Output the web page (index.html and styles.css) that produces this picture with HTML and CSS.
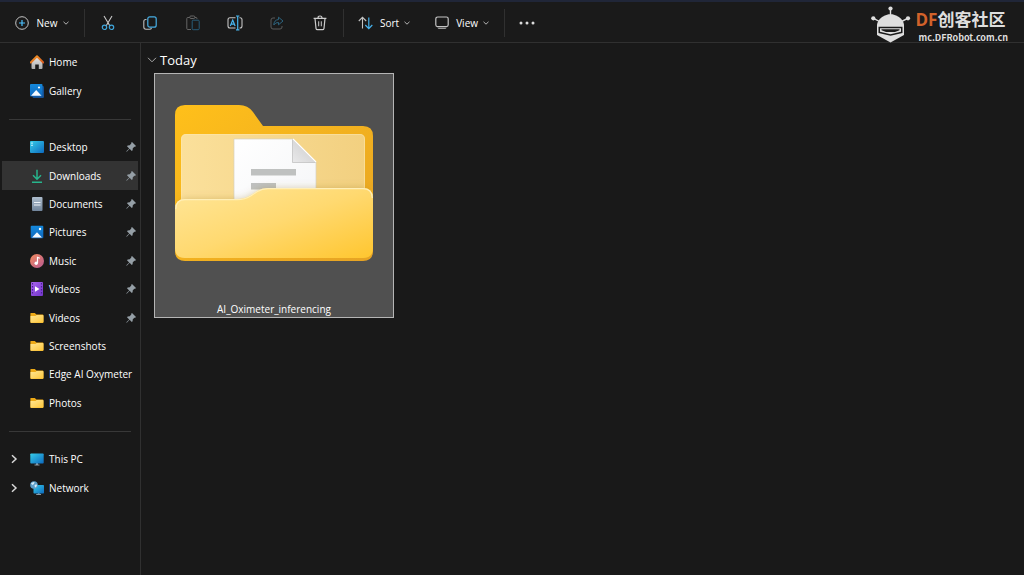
FILE: index.html
```html
<!DOCTYPE html>
<html lang="en">
<head>
  <meta charset="UTF-8" />
  <title>Downloads - File Explorer</title>
  <meta name="viewport" content="width=device-width, initial-scale=1.0"/>
  <link rel="stylesheet" href="styles.css">
</head>
<body>
  <!-- Shared icons -->
  <svg class="defs" width="0" height="0" aria-hidden="true">
    <defs>
      <linearGradient id="folderSmall" x1="0" y1="0" x2="1" y2="1">
        <stop offset="0" stop-color="#ffe694"/><stop offset="1" stop-color="#fdc63a"/>
      </linearGradient>
      <linearGradient id="screen" x1="0" y1="0" x2="1" y2="1">
        <stop offset="0" stop-color="#36cdea"/><stop offset="1" stop-color="#0d69be"/>
      </linearGradient>
      <linearGradient id="photo" x1="0" y1="0" x2="0" y2="1">
        <stop offset="0" stop-color="#1589dc"/><stop offset="1" stop-color="#0e67bd"/>
      </linearGradient>
      <linearGradient id="roof" x1="0" y1="0" x2="1" y2="1">
        <stop offset="0" stop-color="#f59a27"/><stop offset="1" stop-color="#d95b20"/>
      </linearGradient>
      <linearGradient id="wall" x1="0" y1="0" x2="0" y2="1">
        <stop offset="0" stop-color="#e6e6e6"/><stop offset="1" stop-color="#acacac"/>
      </linearGradient>
      <linearGradient id="paper" x1="0" y1="0" x2="0" y2="1">
        <stop offset="0" stop-color="#aebdcd"/><stop offset="1" stop-color="#71859c"/>
      </linearGradient>
      <linearGradient id="disc" x1="0" y1="0" x2="1" y2="1">
        <stop offset="0" stop-color="#f28b5c"/><stop offset="1" stop-color="#b85a93"/>
      </linearGradient>
      <linearGradient id="film" x1="0" y1="0" x2="1" y2="1">
        <stop offset="0" stop-color="#a964ef"/><stop offset="1" stop-color="#7336cb"/>
      </linearGradient>
    </defs>
    <symbol id="pin" viewBox="0 0 10 10">
      <path fill="#959fa6" d="M6 0 10 4 9.200 4.800 8.400 4.700 6.800 6.300 6.600 8.300 5.800 9 3.600 6.800 .8 9.700 .3 9.200 3.200 6.400 1 4.200 1.700 3.400 3.700 3.200 5.300 1.600 5.200 .8Z"/>
    </symbol>
    <symbol id="folder" viewBox="0 0 14 14">
      <path fill="#eda916" d="M.8 2h4l1.600 1.600h6.200q.8 0 .8.8V11q0 1-.9 1H1.200q-.8 0-.8-.8V2.800Q.4 2 .8 2z"/>
      <path fill="url(#folderSmall)" d="M.5 5h5L6.700 4h6q.8 0 .8.8v6q0 .9-.9.9H1.300q-.8 0-.8-.8z"/>
    </symbol>
    <symbol id="chevron" viewBox="0 0 8 8">
      <path d="M1.500 2.800 4 5.200 6.500 2.800" fill="none" stroke="#b5b5b5"/>
    </symbol>
    <symbol id="expand" viewBox="0 0 8 10">
      <path d="M2 1.200 6 5 2 8.800" fill="none" stroke="#d8d8d8" stroke-width="1.500"/>
    </symbol>
  </svg>

  <header class="toolbar">
    <button type="button" class="tool new">
      <svg width="14" height="14" viewBox="0 0 14 14" fill="none">
        <circle cx="7" cy="7" r="6.300" stroke="#c4c4c4"/>
        <path d="M7 4v6M4 7h6" stroke="#4cc2ff" stroke-width="1.200"/>
      </svg>
      <span>New</span>
      <svg width="8" height="8"><use href="#chevron"/></svg>
    </button>

    <div class="actions">
      <button type="button" aria-label="Cut">
        <svg width="14" height="16" viewBox="0 0 14 16" fill="none">
          <path d="M3 1 8.800 10.800M11 1 5.200 10.800" stroke="#c8c8c8" stroke-width="1.100"/>
          <circle cx="3.500" cy="12.300" r="2.200" stroke="#3fa6dc" stroke-width="1.200"/>
          <circle cx="10.500" cy="12.300" r="2.200" stroke="#3fa6dc" stroke-width="1.200"/>
        </svg>
      </button>
      <button type="button" aria-label="Copy">
        <svg width="14" height="14" viewBox="0 0 14 14" fill="none">
          <path d="M3.500 3.500H2.800Q.8 3.500.8 5.500V11Q.8 13.200 3 13.200H6.500Q8.200 13.200 8.500 11.800" stroke="#bdbdbd" stroke-width="1.100"/>
          <rect x="4.800" y=".8" width="8.400" height="10.400" rx="2" stroke="#46aee5" stroke-width="1.200"/>
        </svg>
      </button>
      <button type="button" aria-label="Paste" disabled>
        <svg width="14" height="16" viewBox="0 0 14 16" fill="none">
          <path d="M3.800 2.500H1.800Q.8 2.500.8 3.500V13.500Q.8 14.500 1.800 14.500H5M9 2.500H10Q11 2.500 11 3.800" stroke="#656565"/>
          <rect x="3.800" y="1" width="5" height="2.500" rx="1" stroke="#656565"/>
          <rect x="6.200" y="5.200" width="7" height="9.500" rx="1" stroke="#285c78"/>
        </svg>
      </button>
      <button type="button" aria-label="Rename">
        <svg width="16" height="16" viewBox="0 0 16 16" fill="none">
          <path d="M8.500 2.800H3Q1 2.800 1 4.800V11Q1 13 3 13H8.500M12.500 2.800H13Q15 2.800 15 4.800V11Q15 13 13 13H12.500" stroke="#c4c4c4" stroke-width="1.100"/>
          <path d="M9 1h3.400M10.700 1v13.800M9 14.800h3.400M3.300 11 5.700 5 8.100 11M4.200 9.200h3" stroke="#48b5ee" stroke-width="1.200"/>
        </svg>
      </button>
      <button type="button" aria-label="Share" disabled>
        <svg width="14" height="14" viewBox="0 0 14 14" fill="none">
          <path d="M5 2H3Q1 2 1 4V11Q1 13 3 13H10Q12 13 12 11V10" stroke="#5a5a5a"/>
          <path d="M8.500 1.200 13 5 8.500 8.800V6.500Q5.500 6.200 3.800 9 4 4 8.500 3.500Z" stroke="#2d647f" stroke-linejoin="round"/>
        </svg>
      </button>
      <button type="button" aria-label="Delete">
        <svg width="14" height="16" viewBox="0 0 14 16" fill="none" stroke="#cdcdcd">
          <path d="M.6 3.300h12.800M5 3Q5 1 7 1T9 3M2 3.500 3 13.300Q3.200 14.700 4.500 14.700H9.500Q10.800 14.700 11 13.300L12 3.500" stroke-width="1.200"/>
          <path d="M5.700 6.300v5M8.300 6.300v5"/>
        </svg>
      </button>
    </div>

    <button type="button" class="tool">
      <svg width="15" height="14" viewBox="0 0 15 14" fill="none">
        <path d="M4.500 12.500V1.500M.8 5 4.500 1.300 8.200 5" stroke="#c4c4c4" stroke-width="1.100"/>
        <path d="M10.800 1.500V12.500M7.300 9 10.800 12.600 14.300 9" stroke="#46b2ec" stroke-width="1.200"/>
      </svg>
      <span>Sort</span>
      <svg width="8" height="8"><use href="#chevron"/></svg>
    </button>
    <button type="button" class="tool view">
      <svg width="14" height="14" viewBox="0 0 14 14" fill="none">
        <rect x=".8" y="1" width="12.400" height="9.600" rx="1.800" stroke="#c4c4c4" stroke-width="1.200"/>
        <path d="M2.500 11.800Q3 13 4 13H10Q11 13 11.500 11.800Z" fill="#999"/>
      </svg>
      <span>View</span>
      <svg width="8" height="8"><use href="#chevron"/></svg>
    </button>

    <button type="button" class="more" aria-label="See more">
      <svg width="16" height="4" viewBox="0 0 16 4" fill="#dcdcdc">
        <circle cx="2" cy="2" r="1.500"/><circle cx="8" cy="2" r="1.500"/><circle cx="14" cy="2" r="1.500"/>
      </svg>
    </button>

    <div class="brand">
      <svg width="40" height="38" viewBox="0 0 40 38">
        <g fill="#dedede">
          <circle cx="19.500" cy="2.500" r="2.100"/>
          <circle cx="2.300" cy="12.300" r="2.100"/>
          <circle cx="37" cy="12.300" r="2.100"/>
          <path d="M6 18.500Q7.500 12 14 9.500L17.500 8.200H21.500L25 9.500Q31.500 12 33 18.500V29L19.500 36.500 6 29Z"/>
        </g>
        <path d="M19.500 4v6M3 12.600 8.500 15.500M36.300 12.600 30.500 15.500" stroke="#dedede" stroke-width="1.400"/>
        <path d="M7.500 20.800H31.500V27L19.500 29.800 7.500 27Z" fill="#1a1a1a"/>
        <path d="M9 22.200H30V25.800L19.500 28.300 9 25.800Z" fill="#dedede"/>
        <path d="M10.500 23.200H28.500V24.300L24 26H15L10.500 24.300Z" fill="#1a1a1a"/>
      </svg>
      <div class="brand-text">
        <div class="brand-name"><span>DF</span>创客社区</div>
        <div class="brand-url">mc.DFRobot.com.cn</div>
      </div>
    </div>
  </header>

  <div class="content">
    <nav class="sidebar">
      <ul class="top">
        <li><a href="#">
          <svg class="icon" viewBox="0 0 14 14">
            <path fill="url(#wall)" d="M1.500 6.500 7 1.500 12.500 6.500V13Q12.500 14 11.500 14H8.800V9.500H5.200V14H2.500Q1.500 14 1.500 13Z"/>
            <path d="M.8 7.500 7 1.200 13.200 7.500" fill="none" stroke="url(#roof)" stroke-width="2" stroke-linejoin="round" stroke-linecap="round"/>
          </svg>Home</a></li>
        <li><a href="#">
          <svg class="icon" viewBox="0 0 14 14">
            <rect x="2.500" y="2" width="11.500" height="12" rx="1.200" fill="#164f91"/>
            <rect x="0" y="0" width="12.500" height="12.500" rx="1" fill="url(#photo)"/>
            <path d="M1 11.700 6.200 6 11.500 11.700Z" fill="#f4f9ff"/><circle cx="9" cy="3.500" r="1.100" fill="#fff"/>
          </svg>Gallery</a></li>
      </ul>
      <hr>
      <ul class="pinned">
        <li><a href="#">
          <svg class="icon" viewBox="0 0 14 14">
            <rect x="0" y="1" width="14" height="12" rx="1" fill="url(#screen)"/>
            <path d="M1.300 2.500h1.400v1.300H1.300zM1.300 4.800h1.400v1.300H1.300z" fill="#d7f6ff"/>
          </svg>Desktop<svg class="pin"><use href="#pin"/></svg></a></li>
        <li><a href="#" class="active" aria-current="page">
          <svg class="icon" viewBox="0 0 14 14" fill="none" stroke="#27b58c" stroke-width="1.500">
            <path d="M7 .8V10M3 6.200 7 10.200 11 6.200M2 13.200h10"/>
          </svg>Downloads<svg class="pin"><use href="#pin"/></svg></a></li>
        <li><a href="#">
          <svg class="icon" viewBox="0 0 14 14">
            <rect x="2" y="0" width="10.500" height="14" rx="1" fill="url(#paper)"/>
            <path d="M4 5.500h6.500M4 8h6.500" stroke="#edf2f7" stroke-width="1.200"/>
          </svg>Documents<svg class="pin"><use href="#pin"/></svg></a></li>
        <li><a href="#">
          <svg class="icon" viewBox="0 0 14 14">
            <rect x=".7" y=".7" width="12.600" height="12.600" rx="1" fill="url(#photo)"/>
            <path d="M2 12.500 7 7.300 12 12.500Z" fill="#f4f9ff"/><circle cx="10" cy="4" r="1.200" fill="#fff"/>
          </svg>Pictures<svg class="pin"><use href="#pin"/></svg></a></li>
        <li><a href="#">
          <svg class="icon" viewBox="0 0 14 14">
            <circle cx="7" cy="7" r="7" fill="url(#disc)"/>
            <path d="M7.500 9V3.300L9.800 4.300" fill="none" stroke="#fff" stroke-width="1.200"/><circle cx="6.200" cy="9.200" r="1.700" fill="#fff"/>
          </svg>Music<svg class="pin"><use href="#pin"/></svg></a></li>
        <li><a href="#">
          <svg class="icon" viewBox="0 0 14 14">
            <rect x="1" y="0" width="12" height="14" rx="1" fill="url(#film)"/>
            <path d="M2.500 1v12M11.500 1v12" stroke="#4b2193" stroke-width="1.200" stroke-dasharray="1.500 1.500"/>
            <path d="M5 4.200 9.500 7 5 9.800Z" fill="#fff"/>
          </svg>Videos<svg class="pin"><use href="#pin"/></svg></a></li>
        <li><a href="#"><svg class="icon"><use href="#folder"/></svg>Videos<svg class="pin"><use href="#pin"/></svg></a></li>
        <li><a href="#"><svg class="icon"><use href="#folder"/></svg>Screenshots</a></li>
        <li><a href="#"><svg class="icon"><use href="#folder"/></svg>Edge AI Oxymeter</a></li>
        <li><a href="#"><svg class="icon"><use href="#folder"/></svg>Photos</a></li>
      </ul>
      <hr>
      <ul class="tree">
        <li><a href="#">
          <svg class="expand" width="8" height="10"><use href="#expand"/></svg>
          <svg class="icon" viewBox="0 0 14 14">
            <path d="M6 11h2v1.500h1.500v1h-5v-1H6z" fill="#8d9ba5"/>
            <rect x=".3" y="1.500" width="13.400" height="10" rx=".8" fill="url(#screen)"/>
          </svg>This PC</a></li>
        <li><a href="#">
          <svg class="expand" width="8" height="10"><use href="#expand"/></svg>
          <svg class="icon" viewBox="0 0 14 14">
            <path d="M7.800 12h1.800v1h1.400v1H6.200v-1h1.600z" fill="#8d9ba5"/>
            <rect x="3.500" y="4" width="10.500" height="8.500" rx=".7" fill="url(#screen)"/>
            <circle cx="4" cy="4" r="3.800" fill="#5d9ec8"/>
            <path d="M1 2.500Q2.500.7 4.500 1L4 3 2.500 4ZM4.500 4 6.500 3.200 7 5 5 6.800Z" fill="#d5ebf7"/>
          </svg>Network</a></li>
      </ul>
    </nav>

    <main class="files">
      <button type="button" class="group-title">
        <svg width="10" height="6" viewBox="0 0 10 6"><path d="M1 .8 5 4.800 9 .8" fill="none" stroke="#a8a8a8"/></svg>
        Today
      </button>
      <div class="grid">
        <button type="button" class="file">
          <svg class="folder-art" viewBox="0 0 198 156">
            <defs>
              <linearGradient id="back" x1="0" y1="0" x2="1" y2="1">
                <stop offset="0" stop-color="#ffc01a"/><stop offset="1" stop-color="#e6a324"/>
              </linearGradient>
              <linearGradient id="inside" x1="0" y1="0" x2="1" y2="0">
                <stop offset="0" stop-color="#fbe09b"/><stop offset="1" stop-color="#f2d080"/>
              </linearGradient>
              <linearGradient id="front" x1="0" y1="0" x2="1" y2="1">
                <stop offset="0" stop-color="#ffe699"/><stop offset=".5" stop-color="#ffd970"/><stop offset="1" stop-color="#ffc62f"/>
              </linearGradient>
              <linearGradient id="sheet" x1="0" y1="0" x2="1" y2="1">
                <stop offset="0" stop-color="#fff"/><stop offset="1" stop-color="#f4f5f7"/>
              </linearGradient>
              <linearGradient id="fold" x1="0" y1="1" x2="1" y2="0">
                <stop offset="0" stop-color="#e9e9ea"/><stop offset="1" stop-color="#c9c9ca"/>
              </linearGradient>
              <filter id="soft" x="-10%" y="-20%" width="120%" height="140%">
                <feGaussianBlur stdDeviation="4"/>
              </filter>
              <clipPath id="pocket"><path d="M0 21H198V110H0Z"/></clipPath>
            </defs>
            <path fill="url(#back)" d="M10 0H64Q73 0 78 7L88 21H188Q198 21 198 31V146Q198 156 188 156H10Q0 156 0 146V10Q0 0 10 0Z"/>
            <rect x="6" y="29" width="184" height="90" rx="5" fill="url(#inside)"/>
            <path d="M6.500 115V34Q6.500 29.500 11 29.500H185Q189.500 29.500 189.500 34V115" fill="none" stroke="#ffe9ae" stroke-opacity=".5"/>
            <path fill="url(#sheet)" stroke="#d5d1c3" stroke-width=".7" d="M59 34H118L141 57V110H59Z"/>
            <path fill="url(#fold)" stroke="#bcbcbc" stroke-width=".7" d="M117.500 34.500V57.500H140.500Z"/>
            <path d="M118 34 141 57" stroke="#fff" stroke-width="1.200"/>
            <path fill="#bfc1c0" d="M76 64h45v6.500H76zM76 78h25v6.500H76z"/>
            <g clip-path="url(#pocket)">
              <path fill="#8a6420" fill-opacity=".35" filter="url(#soft)" d="M6 95H62Q70 95 76 91L82 87Q87 84 93 84H192V140H6Z"/>
            </g>
            <path fill="url(#front)" d="M10 94H62Q70 94 76 90L82 86Q87 83 93 83H188Q198 83 198 93V143Q198 153 188 153H10Q0 153 0 143V104Q0 94 10 94Z"/>
            <path d="M.8 104Q1 94.700 10 94.700H62Q70 94.700 76 90.700L82 86.700Q87 83.700 93 83.700H188Q197 83.700 197.300 93" fill="none" stroke="#ffefb8" stroke-width="1.200"/>
          </svg>
          <span>AI_Oximeter_inferencing</span>
        </button>
      </div>
    </main>
  </div>
</body>
</html>
```

FILE: styles.css
```css
:root {
  --bg: #191919;
  --line: #303030;
  --text: #ffffff;
}

* {
  box-sizing: border-box;
}

body {
  margin: 0;
  min-height: 100vh;
  display: flex;
  flex-direction: column;
  background: var(--bg);
  color: var(--text);
  font-family: "Open Sans", "Noto Sans", sans-serif;
  font-size: 10px;
  line-height: 16px;
}

.defs {
  position: absolute;
}

svg {
  display: block;
  flex: none;
}

button {
  display: flex;
  align-items: center;
  justify-content: center;
  padding: 0;
  border: none;
  background: none;
  color: inherit;
  font: inherit;
}

a {
  color: inherit;
  text-decoration: none;
}

/* Toolbar */
.toolbar {
  display: flex;
  align-items: center;
  height: 43px;
  padding: 2px 16px 0 15px;
  border-top: 2px solid #202638;
  border-bottom: 1px solid var(--line);
  background: #1a1a1a;
}

.tool {
  gap: 4px;
  height: 28px;
}

.tool span {
  padding-left: 3px;
  font-weight: 500;
}

.tool.new {
  width: 55px;
  justify-content: space-between;
}

.tool.view {
  margin-left: 24px;
}

.actions {
  display: flex;
  width: 260px;
  height: 28px;
  margin: 0 14px;
  padding: 0 2px;
  border-left: 1px solid var(--line);
  border-right: 1px solid var(--line);
}

.actions button {
  flex: 1;
}

.more {
  height: 28px;
  margin-left: 14px;
  padding-left: 14px;
  border-left: 1px solid var(--line);
}

.brand {
  display: flex;
  align-items: center;
  gap: 4px;
  margin-top: 4px;
  margin-left: auto;
  color: #dedede;
  font-weight: 700;
}

.brand-text {
  padding-top: 2px;
}

.brand-name {
  font-family: "Open Sans", "Noto Sans CJK SC", sans-serif;
  font-size: 17px;
  line-height: 24px;
}

.brand-name span {
  color: #d2622a;
}

.brand-url {
  padding-left: 3px;
  font-family: "Noto Sans CJK SC", "Open Sans", sans-serif;
  font-size: 9px;
  line-height: 12px;
}

/* Sidebar */
.content {
  flex: 1;
  display: flex;
}

.sidebar {
  flex: none;
  width: 141px;
  padding: 5px 2px;
  border-right: 1px solid var(--line);
}

.sidebar ul {
  display: grid;
  grid-template-columns: minmax(0, 1fr);
  grid-auto-rows: 1fr;
  margin: 0;
  padding: 0;
  list-style: none;
}

.sidebar .top,
.sidebar .tree {
  min-height: 57px;
}

.sidebar .pinned {
  min-height: 284px;
}

.sidebar hr {
  height: 1px;
  margin: 14px 7px 13px;
  border: none;
  background: #383838;
}

.sidebar a {
  display: flex;
  align-items: center;
  gap: 5px;
  height: 100%;
  padding: 0 2px 0 28px;
  white-space: nowrap;
}

.sidebar a.active {
  background: #333;
}

.sidebar .tree a {
  padding-left: 8px;
}

.icon {
  width: 14px;
  height: 14px;
}

.expand {
  margin-right: 7px;
}

.pin {
  width: 10px;
  height: 10px;
  margin-left: auto;
}

/* Files */
.files {
  flex: 1;
  padding: 8px 13px;
}

.group-title {
  gap: 3px;
  margin-left: -7px;
  font-size: 13px;
  line-height: 18px;
}

.grid {
  display: flex;
  flex-wrap: wrap;
  gap: 8px;
  margin-top: 4px;
}

.file {
  flex-direction: column;
  gap: 40px;
  width: 240px;
  padding: 31px 20px 0;
  border: 1px solid #b5b5b5;
  background: #505050;
}

.folder-art {
  width: 100%;
}
```
